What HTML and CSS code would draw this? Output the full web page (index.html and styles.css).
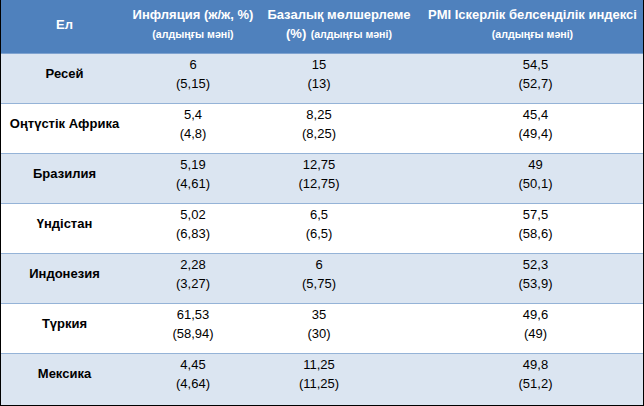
FILE: index.html
```html
<!DOCTYPE html>
<html lang="kk">
<head>
<meta charset="utf-8">
<link rel="stylesheet" href="styles.css">
</head>
<body>
<div class="table">
  <div class="row head">
    <div class="cell c1"><span class="h">Ел</span></div>
    <div class="cell c2"><span class="h">Инфляция (ж/ж, %)</span><br><span class="sub">(алдыңғы мәні)</span></div>
    <div class="cell c3"><span class="h">Базалық мөлшерлеме</span><br><span class="h">(%)</span> <span class="sub">(алдыңғы мәні)</span></div>
    <div class="cell c4"><span class="h">PMI Іскерлік белсенділік индексі</span><br><span class="sub">(алдыңғы мәні)</span></div>
  </div>
  <div class="row alt">
    <div class="cell c1 name">Ресей</div>
    <div class="cell c2 val">6<br>(5,15)</div>
    <div class="cell c3 val">15<br>(13)</div>
    <div class="cell c4 val">54,5<br>(52,7)</div>
  </div>
  <div class="row">
    <div class="cell c1 name">Оңтүстік Африка</div>
    <div class="cell c2 val">5,4<br>(4,8)</div>
    <div class="cell c3 val">8,25<br>(8,25)</div>
    <div class="cell c4 val">45,4<br>(49,4)</div>
  </div>
  <div class="row alt">
    <div class="cell c1 name">Бразилия</div>
    <div class="cell c2 val">5,19<br>(4,61)</div>
    <div class="cell c3 val">12,75<br>(12,75)</div>
    <div class="cell c4 val">49<br>(50,1)</div>
  </div>
  <div class="row">
    <div class="cell c1 name">Үндістан</div>
    <div class="cell c2 val">5,02<br>(6,83)</div>
    <div class="cell c3 val">6,5<br>(6,5)</div>
    <div class="cell c4 val">57,5<br>(58,6)</div>
  </div>
  <div class="row alt">
    <div class="cell c1 name">Индонезия</div>
    <div class="cell c2 val">2,28<br>(3,27)</div>
    <div class="cell c3 val">6<br>(5,75)</div>
    <div class="cell c4 val">52,3<br>(53,9)</div>
  </div>
  <div class="row">
    <div class="cell c1 name">Түркия</div>
    <div class="cell c2 val">61,53<br>(58,94)</div>
    <div class="cell c3 val">35<br>(30)</div>
    <div class="cell c4 val">49,6<br>(49)</div>
  </div>
  <div class="row alt last">
    <div class="cell c1 name">Мексика</div>
    <div class="cell c2 val">4,45<br>(4,64)</div>
    <div class="cell c3 val">11,25<br>(11,25)</div>
    <div class="cell c4 val">49,8<br>(51,2)</div>
  </div>
</div>
</body>
</html>
```
FILE: styles.css
```css
* { box-sizing: border-box; }
html, body { margin: 0; padding: 0; background: #fff; }
body { font-family: "Liberation Sans", Arial, sans-serif; color: #000; }

.table {
  width: 644px;
  border-left: 1px solid #000;
  border-right: 1px solid #000;
  border-bottom: 1px solid #000;
}

.row {
  display: grid;
  grid-template-columns: 127px 130px 162px 223px;
  height: 50px;
  border-bottom: 1px solid #95b3d7;
  background: #fff;
}
.row.alt { background: #dbe5f1; }
.row.last { border-bottom: none; height: 51px; }

.row.head {
  height: 54px;
  background: #4f81bd;
  border-bottom: 1px solid #7fa3d0;
  color: #fff;
  align-items: center;
  padding: 5px 0 13px;
}

.cell { text-align: center; }

.head .cell { line-height: 18px; font-weight: bold; }
.head .h { font-size: 13px; }
.head .sub { font-size: 10.6px; }
.head .c4 { padding: 0 2px 0 4px; }

.name {
  font-weight: bold;
  font-size: 13px;
  line-height: 19px;
  padding-top: 10px;
}

.val {
  font-size: 13px;
  line-height: 19px;
  padding-top: 1px;
}
.val.c3 { padding-right: 40px; }
.val.c4 { padding-left: 8px; }
```
